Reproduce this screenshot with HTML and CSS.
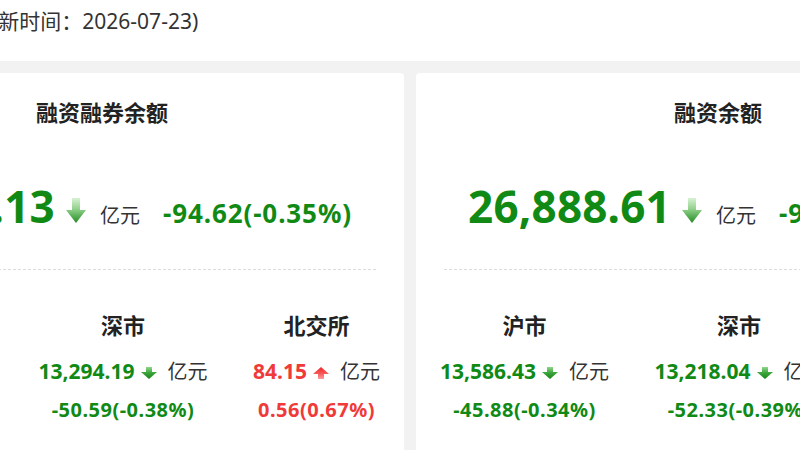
FILE: index.html
```html
<!DOCTYPE html>
<html lang="zh-CN">
<head>
    <meta charset="UTF-8">
    <meta name="viewport" content="width=device-width, initial-scale=1.0">
    <title>融资融券余额</title>
    <link rel="stylesheet" href="styles.css">
</head>
<body>
    <svg class="defs" width="0" height="0">
        <defs>
            <linearGradient id="down-big" x1="0" y1="0" x2="0" y2="1">
                <stop offset="0" stop-color="#d9f2d4"/>
                <stop offset="0.45" stop-color="#8fd08a"/>
                <stop offset="1" stop-color="#238c23"/>
            </linearGradient>
            <linearGradient id="down-small" x1="0" y1="0" x2="0" y2="1">
                <stop offset="0" stop-color="#8fd68a"/>
                <stop offset="0.5" stop-color="#3aa33a"/>
                <stop offset="1" stop-color="#17861a"/>
            </linearGradient>
            <linearGradient id="up-small" x1="0" y1="0" x2="0" y2="1">
                <stop offset="0" stop-color="#ee2a2a"/>
                <stop offset="0.5" stop-color="#f55252"/>
                <stop offset="1" stop-color="#ff9c9c"/>
            </linearGradient>
            <symbol id="arrow-big" viewBox="0 0 20 25">
                <path d="M6 0H14V12H20L10 25L0 12H6Z" fill="url(#down-big)"/>
            </symbol>
            <symbol id="arrow-down" viewBox="0 0 16 12">
                <path d="M5 0H11V5H16L8 12L0 5H5Z" fill="url(#down-small)"/>
            </symbol>
            <symbol id="arrow-up" viewBox="0 0 16 12">
                <path d="M5 12H11V7H16L8 0L0 7H5Z" fill="url(#up-small)"/>
            </symbol>
        </defs>
    </svg>

    <div class="page">
        <div class="update">(更新时间：2026-07-23)</div>

        <div class="board">
            <section class="card">
                <h2 class="card-title">融资融券余额</h2>
                <div class="total down">
                    <span class="total-value">27,047.13</span>
                    <svg class="arrow-big"><use href="#arrow-big"/></svg>
                    <span class="unit">亿元</span>
                    <span class="total-change">-94.62(-0.35%)</span>
                </div>
                <div class="divider"></div>
                <div class="markets">
                    <div class="market down">
                        <h3>沪市</h3>
                        <div class="market-value">
                            <span class="num">13,668.79</span>
                            <svg class="arrow-small"><use href="#arrow-down"/></svg>
                            <span class="unit">亿元</span>
                        </div>
                        <div class="market-change">-44.59(-0.33%)</div>
                    </div>
                    <div class="market down">
                        <h3>深市</h3>
                        <div class="market-value">
                            <span class="num">13,294.19</span>
                            <svg class="arrow-small"><use href="#arrow-down"/></svg>
                            <span class="unit">亿元</span>
                        </div>
                        <div class="market-change">-50.59(-0.38%)</div>
                    </div>
                    <div class="market up">
                        <h3>北交所</h3>
                        <div class="market-value">
                            <span class="num">84.15</span>
                            <svg class="arrow-small"><use href="#arrow-up"/></svg>
                            <span class="unit">亿元</span>
                        </div>
                        <div class="market-change">0.56(0.67%)</div>
                    </div>
                </div>
            </section>

            <section class="card">
                <h2 class="card-title">融资余额</h2>
                <div class="total down">
                    <span class="total-value">26,888.61</span>
                    <svg class="arrow-big"><use href="#arrow-big"/></svg>
                    <span class="unit">亿元</span>
                    <span class="total-change">-97.66(-0.36%)</span>
                </div>
                <div class="divider"></div>
                <div class="markets">
                    <div class="market down">
                        <h3>沪市</h3>
                        <div class="market-value">
                            <span class="num">13,586.43</span>
                            <svg class="arrow-small"><use href="#arrow-down"/></svg>
                            <span class="unit">亿元</span>
                        </div>
                        <div class="market-change">-45.88(-0.34%)</div>
                    </div>
                    <div class="market down">
                        <h3>深市</h3>
                        <div class="market-value">
                            <span class="num">13,218.04</span>
                            <svg class="arrow-small"><use href="#arrow-down"/></svg>
                            <span class="unit">亿元</span>
                        </div>
                        <div class="market-change">-52.33(-0.39%)</div>
                    </div>
                    <div class="market up">
                        <h3>北交所</h3>
                        <div class="market-value">
                            <span class="num">84.14</span>
                            <svg class="arrow-small"><use href="#arrow-up"/></svg>
                            <span class="unit">亿元</span>
                        </div>
                        <div class="market-change">0.55(0.66%)</div>
                    </div>
                </div>
            </section>
        </div>
    </div>
</body>
</html>
```

FILE: styles.css
```css
body {
    margin: 0;
    padding: 0;
    background-color: #ffffff;
    color: #333333;
    font-family: "Noto Sans", "Noto Sans CJK SC", sans-serif;
    overflow: hidden;
}
.defs {
    position: absolute;
    width: 0;
    height: 0;
}
.page {
    margin-left: -212px;
    width: 1244px;
}
.update {
    padding: 7px 0 26px 183px;
    font-size: 21px;
    line-height: 28px;
    color: #333333;
}
.board {
    display: flex;
    gap: 12px;
    padding: 12px;
    background: #f2f2f2;
    min-height: 400px;
}
.card {
    width: 604px;
    box-sizing: border-box;
    padding: 24px 24px 30px;
    background: #ffffff;
    border-radius: 4px;
}
.card-title {
    margin: 0;
    text-align: center;
    font-size: 22px;
    line-height: 30px;
    font-weight: bold;
    color: #222222;
}
.down {
    color: #108a14;
}
.up {
    color: #f03a3a;
}
.total {
    display: flex;
    justify-content: center;
    align-items: baseline;
    margin-top: 54px;
    height: 50px;
}
.total-value {
    font-size: 44px;
    line-height: 50px;
    font-weight: bold;
    letter-spacing: 0.2px;
}
.arrow-big {
    width: 20px;
    height: 25px;
    margin-left: 11px;
}
.total .unit {
    margin-left: 14px;
    font-size: 20px;
    color: #333333;
}
.total-change {
    margin-left: 23px;
    font-size: 26px;
    font-weight: bold;
    letter-spacing: 0.9px;
}
.divider {
    margin: 38px 4px 0;
    border-top: 1px dashed #dcdcdc;
}
.markets {
    display: flex;
    justify-content: space-between;
    margin-top: 40px;
}
.market {
    text-align: center;
}
.market h3 {
    margin: 0;
    font-size: 22px;
    line-height: 30px;
    font-weight: bold;
    color: #222222;
}
.market-value {
    display: flex;
    align-items: baseline;
    margin-top: 16px;
    line-height: 30px;
}
.market-value .num {
    font-size: 21px;
    font-weight: bold;
}
.arrow-small {
    width: 16px;
    height: 12px;
    margin-left: 6px;
    margin-bottom: 3px;
}
.market-value .unit {
    margin-left: 11px;
    font-size: 20px;
    color: #333333;
}
.market-change {
    margin-top: 10px;
    font-size: 20px;
    line-height: 26px;
    font-weight: bold;
    letter-spacing: 0.5px;
}
```
